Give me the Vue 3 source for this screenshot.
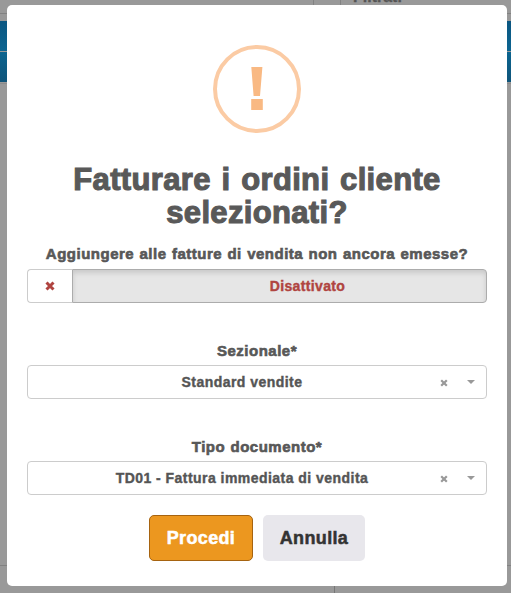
<script setup>
import { ref } from 'vue'

const question = ref('Aggiungere alle fatture di vendita non ancora emesse?')
const selects = ref([
  { label: 'Sezionale*', value: 'Standard vendite' },
  { label: 'Tipo documento*', value: 'TD01 - Fattura immediata di vendita' },
])
</script>

<template>
  <div class="page">
    <div class="backdrop">
      <div class="filters">
        <div class="filter"></div>
        <div class="filter last"><span>Filtrati</span></div>
      </div>
      <div class="thead first"></div>
      <div class="thead"></div>
      <div class="tbody"></div>
      <div class="tfoot"><div class="cell"></div><div class="cell"></div></div>
    </div>

    <div class="modal">
      <div class="icon">
        <svg width="88" height="88" viewBox="0 0 88 88">
          <circle cx="44" cy="44" r="42" fill="none" stroke="#fbcba4" stroke-width="4" />
          <path d="M38.3 22H49.4L47 51H40.6ZM38.2 54H49.8V65H38.2Z" fill="#f9b983" />
        </svg>
      </div>
      <h2>Fatturare i ordini cliente selezionati?</h2>
      <div class="label">{{ question }}</div>
      <div class="toggle">
        <div class="toggle-icon">
          <svg width="10" height="10" viewBox="0 0 10 10">
            <path d="M1.5 1.5L8.5 8.5M8.5 1.5L1.5 8.5" stroke="#b04440" stroke-width="3" />
          </svg>
        </div>
        <div class="toggle-text">Disattivato</div>
      </div>
      <div v-for="s in selects" :key="s.label" class="group">
        <div class="label">{{ s.label }}</div>
        <div class="select">
          <span class="value">{{ s.value }}</span>
          <svg class="clear" width="8" height="8" viewBox="0 0 8 8">
            <path d="M1.2 1.2L6.8 6.8M6.8 1.2L1.2 6.8" stroke="#999" stroke-width="2.2" />
          </svg>
          <svg class="caret" width="8" height="4" viewBox="0 0 8 4">
            <path d="M0 0H8L4 4Z" fill="#999" />
          </svg>
        </div>
      </div>
      <div class="actions">
        <button class="ok">Procedi</button>
        <button class="cancel">Annulla</button>
      </div>
    </div>
  </div>
</template>

<style>
body {
  background: #999;
  overflow: hidden;
}
</style>

<style scoped>
* {
  box-sizing: border-box;
}
.page {
  position: relative;
  width: 511px;
  height: 593px;
  overflow: hidden;
  font-family: "Liberation Sans", Arial, sans-serif;
  font-weight: 700;
  color: #595959;
}
.backdrop {
  display: flex;
  flex-direction: column;
  height: 593px;
  background: #999;
}
.filters {
  display: flex;
  gap: 26px;
  height: 14px;
  flex: none;
  margin-bottom: 7px;
}
.filter {
  width: 314px;
  border: solid #828282;
  border-width: 0 1px 1px 0;
}
.filter.last {
  flex: 1;
  border-width: 0 0 1px 1px;
  padding-left: 12px;
  font-size: 16px;
  color: #555;
}
.filter span {
  display: block;
  line-height: 18px;
  margin-top: -12px;
  -webkit-text-stroke: 0.3px #555;
}
.thead {
  height: 30px;
  margin-bottom: 1px;
  background: linear-gradient(#0b648f, #0f557a);
}
.thead.first {
  background: linear-gradient(#0b5680, #0c6591);
}
.tbody {
  flex: 1;
  border-top: 1px solid #8c8c8c;
  border-bottom: 1px solid #828282;
}
.tfoot {
  display: flex;
  height: 27px;
}
.cell:first-child {
  width: 335px;
  border-right: 1px solid #777;
}
.modal {
  position: absolute;
  left: 7px;
  top: 5px;
  width: 500px;
  height: 581px;
  padding: 40px 20px 0;
  border-radius: 5px;
  background: #fff;
  text-align: center;
}
.icon {
  height: 88px;
}
.icon svg {
  display: block;
  margin: 0 auto;
}
h2 {
  margin: 30px 0 14px;
  font-size: 31px;
  line-height: 33px;
  letter-spacing: 0.34px;
  word-spacing: 1.8px;
  -webkit-text-stroke: 1.1px #595959;
}
.label {
  height: 20px;
  margin-bottom: 6px;
  line-height: 22px;
  font-size: 15px;
  letter-spacing: 0.5px;
  word-spacing: 0.7px;
  -webkit-text-stroke: 0.6px #555;
  white-space: nowrap;
}
.toggle {
  display: flex;
  height: 34px;
  border-radius: 4px;
  font-size: 14px;
  letter-spacing: 0.36px;
}
.toggle-icon {
  display: flex;
  width: 45px;
  align-items: center;
  justify-content: center;
  border: 1px solid #ccc;
  border-right: 0;
  border-radius: 4px 0 0 4px;
}
.toggle-text {
  flex: 1;
  line-height: 32px;
  padding-left: 56px;
  border: 1px solid #acacac;
  border-radius: 0 4px 4px 0;
  background: #e6e6e6;
  box-shadow: inset 0 3px 5px rgba(0, 0, 0, 0.125);
  color: #b04440;
  -webkit-text-stroke: 0.4px #b04440;
}
.group {
  margin-top: 36px;
}
.group .label {
  line-height: 24px;
}
.select {
  display: flex;
  align-items: center;
  height: 34px;
  padding: 0 11px 0 14px;
  border: 1px solid #ccc;
  border-radius: 4px;
  font-size: 14px;
  letter-spacing: 0.46px;
  color: #555;
}
.value {
  flex: 1;
  padding-left: 2px;
  line-height: 32px;
  -webkit-text-stroke: 0.4px #555;
}
.clear {
  margin: 2px 19px 0 0;
}
.actions {
  display: flex;
  justify-content: center;
  gap: 10px;
  margin-top: 20px;
}
button {
  height: 46px;
  padding: 0;
  border: 0;
  border-radius: 5px;
  font: 700 18px "Liberation Sans", Arial, sans-serif;
  letter-spacing: 0.35px;
}
.ok {
  width: 104px;
  border: 1px solid #a66310;
  background: #ec971f;
  color: #fff;
  -webkit-text-stroke: 0.5px #fff;
}
.cancel {
  width: 102px;
  background: #e8e7ec;
  color: #333;
  -webkit-text-stroke: 0.5px #333;
}
</style>
